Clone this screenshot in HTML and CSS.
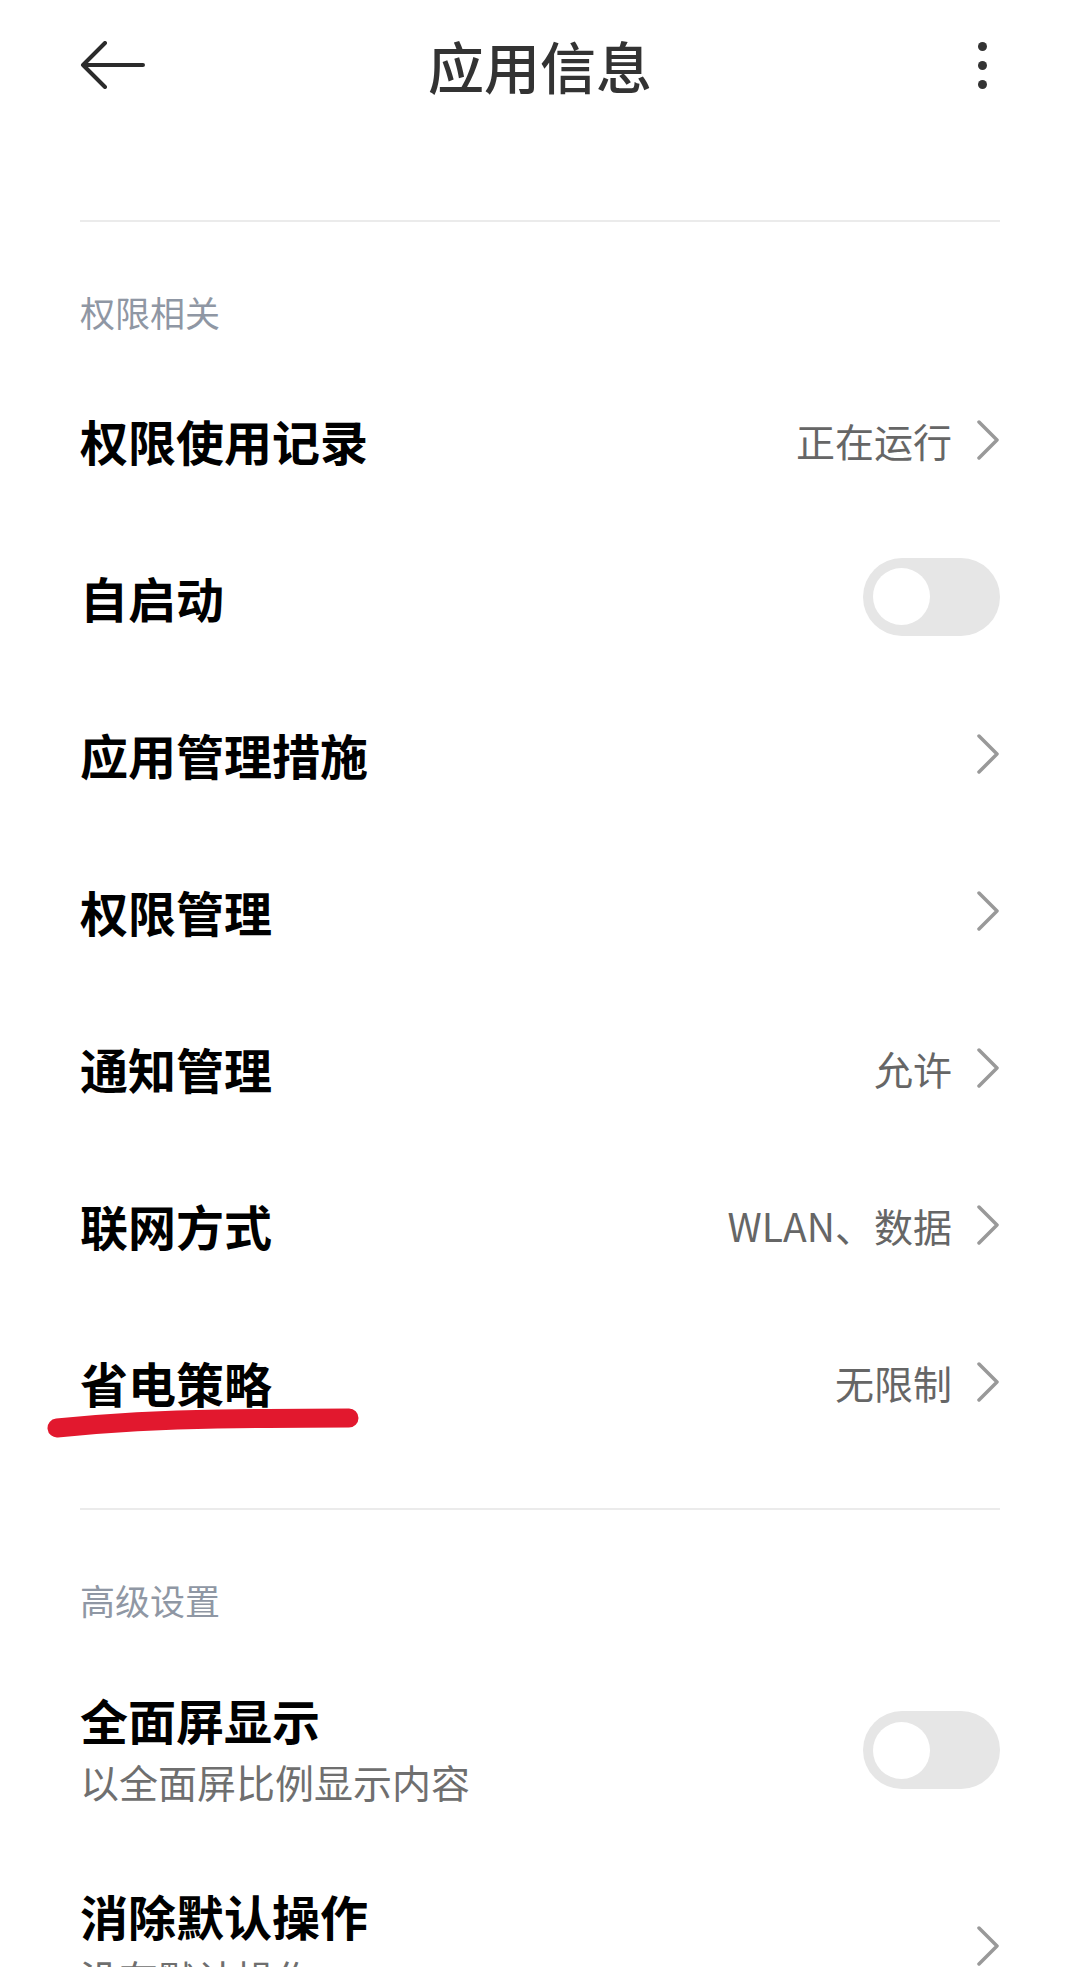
FILE: index.html
```html
<!DOCTYPE html>
<html lang="zh">
<head>
  <meta charset="UTF-8">
  <meta name="viewport" content="width=device-width, initial-scale=1.0">
  <title>应用信息</title>
  <link rel="stylesheet" href="styles.css">
</head>
<body>
  <div class="header">
    <svg class="back" width="66" height="48" viewBox="0 0 66 48">
      <path d="M3 24 H63 M25 2 L3 24 L25 46" fill="none" stroke="#2b2b2b" stroke-width="4" stroke-linecap="round" stroke-linejoin="round"/>
    </svg>
    <div class="title">应用信息</div>
    <div class="more">
      <span></span><span></span><span></span>
    </div>
  </div>

  <div class="page">
    <div class="divider top"></div>

    <div class="section-title">权限相关</div>
    <div class="list">
      <div class="row">
        <div class="label">权限使用记录</div>
        <div class="value">正在运行</div>
        <svg class="chevron" width="24" height="40" viewBox="0 0 24 40"><polyline points="3,2 21,20 3,38"/></svg>
      </div>
      <div class="row">
        <div class="label">自启动</div>
        <div class="switch"><div class="knob"></div></div>
      </div>
      <div class="row">
        <div class="label">应用管理措施</div>
        <svg class="chevron" width="24" height="40" viewBox="0 0 24 40"><polyline points="3,2 21,20 3,38"/></svg>
      </div>
      <div class="row">
        <div class="label">权限管理</div>
        <svg class="chevron" width="24" height="40" viewBox="0 0 24 40"><polyline points="3,2 21,20 3,38"/></svg>
      </div>
      <div class="row">
        <div class="label">通知管理</div>
        <div class="value">允许</div>
        <svg class="chevron" width="24" height="40" viewBox="0 0 24 40"><polyline points="3,2 21,20 3,38"/></svg>
      </div>
      <div class="row">
        <div class="label">联网方式</div>
        <div class="value">WLAN、数据</div>
        <svg class="chevron" width="24" height="40" viewBox="0 0 24 40"><polyline points="3,2 21,20 3,38"/></svg>
      </div>
      <div class="row marked">
        <div class="label">省电策略</div>
        <div class="value">无限制</div>
        <svg class="chevron" width="24" height="40" viewBox="0 0 24 40"><polyline points="3,2 21,20 3,38"/></svg>
        <!-- 手绘红线 -->
        <svg class="scribble" width="320" height="32" viewBox="0 0 320 32">
          <path d="M10 20 Q 90 12 170 11 T 302 10" fill="none" stroke="#e2182e" stroke-width="19" stroke-linecap="round"/>
        </svg>
      </div>
    </div>

    <div class="divider"></div>

    <div class="section-title">高级设置</div>
    <div class="list">
      <div class="row tall">
        <div class="text">
          <div class="label">全面屏显示</div>
          <div class="sub">以全面屏比例显示内容</div>
        </div>
        <div class="switch"><div class="knob"></div></div>
      </div>
      <div class="row tall">
        <div class="text">
          <div class="label">消除默认操作</div>
          <div class="sub">没有默认操作</div>
        </div>
        <svg class="chevron" width="24" height="40" viewBox="0 0 24 40"><polyline points="3,2 21,20 3,38"/></svg>
      </div>
    </div>
  </div>
</body>
</html>
```

FILE: styles.css
```css
body {
  margin: 0;
  font-family: "Noto Sans CJK SC", "Noto Sans", sans-serif;
  background-color: #fff;
  color: #000;
  overflow: hidden;
}

/* 顶栏 */
.header {
  height: 130px;
  padding: 0 80px;
  display: grid;
  grid-template-columns: 1fr auto 1fr;
  align-items: center;
}

.back {
  display: block;
}

.title {
  font-size: 56px;
  font-weight: 500;
  line-height: 70px;
  color: #333;
}

.more {
  justify-self: end;
  display: flex;
  flex-direction: column;
  gap: 10px;
  margin-right: 13px;
}

.more span {
  width: 9px;
  height: 9px;
  border-radius: 50%;
  background-color: #333;
}

.page {
  padding: 0 80px;
}

.divider {
  height: 2px;
  background-color: #ebebeb;
  margin-top: 48px;
}

.divider.top {
  margin-top: 90px;
}

.section-title {
  font-size: 35px;
  line-height: 48px;
  color: #8f97a4;
  padding: 66px 0 25px;
}

.row {
  position: relative;
  min-height: 157px;
  box-sizing: border-box;
  padding: 37px 0;
  display: flex;
  align-items: center;
}

.row.tall {
  padding: 39px 0 33px;
}

.label {
  flex: 1;
  font-size: 48px;
  line-height: 62px;
  font-weight: 700;
  color: #000;
}

.text {
  flex: 1;
}

.sub {
  font-size: 39px;
  line-height: 62px;
  color: #6f6f6f;
}

.value {
  font-size: 39px;
  color: #666;
  margin-right: 24px;
}

.chevron {
  display: block;
  fill: none;
  stroke: #999;
  stroke-width: 3.5;
  stroke-linecap: round;
  stroke-linejoin: round;
}

/* 开关 */
.switch {
  width: 137px;
  height: 78px;
  border-radius: 39px;
  background-color: #e6e6e6;
  display: flex;
  align-items: center;
  padding-left: 10px;
  box-sizing: border-box;
}

.knob {
  width: 57px;
  height: 57px;
  border-radius: 50%;
  background-color: #fff;
}

.scribble {
  position: absolute;
  left: -33px;
  top: 105px;
}
```
